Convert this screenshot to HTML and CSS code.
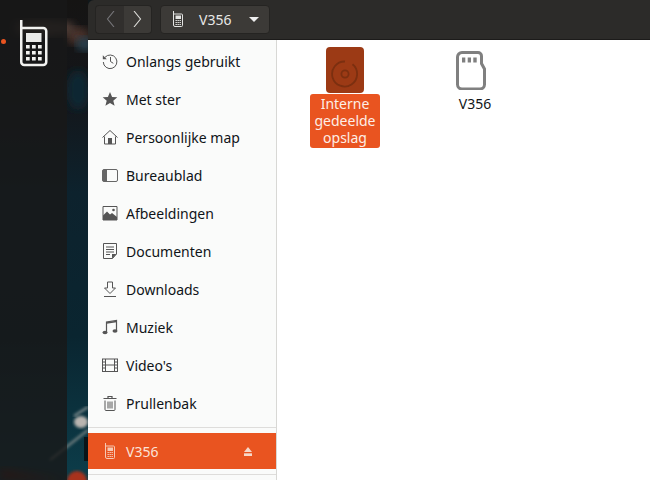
FILE: index.html
```html
<!DOCTYPE html>
<html lang="nl">
<head>
<meta charset="utf-8">
<title>V356</title>
<link rel="stylesheet" href="styles.css">
</head>
<body>
<div class="desktop">
  <svg class="backdrop" width="88" height="480" viewBox="0 0 88 480">
    <defs>
      <linearGradient id="sky" x1="0" y1="0" x2="0" y2="1">
        <stop offset="0" stop-color="#151413"/>
        <stop offset=".2" stop-color="#14161a"/>
        <stop offset=".4" stop-color="#0d222d"/>
        <stop offset=".7" stop-color="#0a2530"/>
        <stop offset="1" stop-color="#0c3d4a"/>
      </linearGradient>
      <filter id="soft"><feGaussianBlur stdDeviation="4"/></filter>
      <filter id="soft1"><feGaussianBlur stdDeviation="1.500"/></filter>
    </defs>
    <rect width="88" height="480" fill="url(#sky)"/>
    <ellipse cx="78" cy="36" rx="12" ry="9" fill="#4a3329" filter="url(#soft)"/>
    <ellipse cx="45" cy="28" rx="30" ry="8" fill="#57423a" filter="url(#soft)"/>
    <ellipse cx="85" cy="44" rx="9" ry="7" fill="#28404f" filter="url(#soft)"/>
    <ellipse cx="78" cy="90" rx="12" ry="20" fill="#0f2731" filter="url(#soft)"/>
    <path d="M0 468Q40 476 70 480H0z" fill="#5c1f12" filter="url(#soft)"/>
    <path d="M50 460 88 430" stroke="#8a918f" stroke-width="2" filter="url(#soft1)"/>
    <path d="M74 416 88 407" stroke="#a9adab" stroke-width="1.500" filter="url(#soft1)"/>
    <ellipse cx="81" cy="422" rx="7" ry="6" fill="#b9b5b0" filter="url(#soft1)"/>
    <circle cx="77" cy="481" r="10" fill="#a8301a" filter="url(#soft1)"/>
    <rect x="84" y="437" width="4" height="24" fill="#0a1418"/>
  </svg>
  <aside class="dock">
    <span class="dot"></span>
    <svg class="dock-phone" viewBox="0 0 28 47"><path d="M1.250 0V42a3 3 0 0 0 3 3h19a3 3 0 0 0 3-3V11a3 3 0 0 0-3-3H1.250" fill="none" stroke="#f2f2f0" stroke-width="2.500"/><rect x="6" y="13" width="15.500" height="9" fill="#eaeae8"/><g fill="#f2f2f0"><rect x="6" y="25" width="3.700" height="3.500"/><rect x="12" y="25" width="3.700" height="3.500"/><rect x="18" y="25" width="3.700" height="3.500"/><rect x="6" y="31" width="3.700" height="3.500"/><rect x="12" y="31" width="3.700" height="3.500"/><rect x="18" y="31" width="3.700" height="3.500"/><rect x="6" y="37" width="3.700" height="3.500"/><rect x="12" y="37" width="3.700" height="3.500"/><rect x="18" y="37" width="3.700" height="3.500"/></g></svg>
  </aside>
  <div class="wallpaper"></div>
  <main class="window">
    <header class="headerbar">
      <div class="nav">
        <button class="nav-btn back"><svg width="9" height="16" viewBox="0 0 9 16"><path d="M8 0 1.500 8 8 16" fill="none" stroke="#77767a" stroke-width="1.100"/></svg></button>
        <button class="nav-btn fwd"><svg width="9" height="16" viewBox="0 0 9 16"><path d="M1 0l6.500 8L1 16" fill="none" stroke="#dcdcd8" stroke-width="1.100"/></svg></button>
      </div>
      <button class="path">
        <svg class="path-icon" width="10" height="16" viewBox="0 0 10 16"><path d="M.5 0v14a1.500 1.500 0 0 0 1.500 1.500h6.500A1 1 0 0 0 9.500 14V4A1 1 0 0 0 8.500 3H1" fill="none" stroke="#e4e4e2"/><rect x="2.500" y="4.500" width="5.500" height="3.500" fill="#e4e4e2"/><path d="M2.500 9.500h5.500M2.500 11.500h5.500M2.500 13.500h5.500" stroke="#e4e4e2" stroke-dasharray="1.400 .6"/></svg>
        <span class="path-label">V356</span>
        <span class="caret"></span>
      </button>
    </header>
    <div class="body">
      <nav class="sidebar">
        <ul class="places">
          <li class="place"><svg class="ico" viewBox="0 0 16 16"><path d="M3 4.300A6.800 6.800 0 1 1 1.300 9" fill="none" stroke="#555" stroke-width="1"/><path d="M.8 2.300v4h4z" fill="#555"/><path d="M8.500 4v4.500l2.800 1.800" fill="none" stroke="#555"/></svg>Onlangs gebruikt</li>
          <li class="place"><svg class="ico" viewBox="0 0 16 16"><path d="M8 1l2.100 4.900 5.200.4-4 3.400 1.300 5.100L8 12.100l-4.600 2.700 1.300-5.100-4-3.400 5.200-.4z" fill="#555"/></svg>Met ster</li>
          <li class="place"><svg class="ico" viewBox="0 0 16 16"><path d="M.5 8.500 8 1.500l7.500 7" fill="none" stroke="#555"/><path d="M2.500 7.500v7.500h11V7.500" fill="none" stroke="#555"/><rect x="6" y="9" width="4" height="6" fill="#555"/></svg>Persoonlijke map</li>
          <li class="place"><svg class="ico" viewBox="0 0 16 16"><rect x=".5" y="2.500" width="15" height="12" rx="1.500" fill="none" stroke="#666"/><path d="M2 2.500h3v12H2a1.500 1.500 0 0 1-1.500-1.500V4A1.500 1.500 0 0 1 2 2.500z" fill="#666"/></svg>Bureaublad</li>
          <li class="place"><svg class="ico" viewBox="0 0 16 16"><path d="M1 1.500h14v13.500H1z" fill="none" stroke="#555"/><path d="M1 13v-2.500l4-4 3 3 2-1.500 5 4V15H1z" fill="#555"/><circle cx="11.500" cy="5" r="1.300" fill="#555"/></svg>Afbeeldingen</li>
          <li class="place"><svg class="ico" viewBox="0 0 16 16"><path d="M1.500.5h13V11l-4 4.500h-9z" fill="none" stroke="#555"/><path d="M4 4h8M4 6.500h8M4 9h8M4 11.500h4" stroke="#555"/><path d="M10 11h4.500L10 15.500z" fill="#555"/></svg>Documenten</li>
          <li class="place"><svg class="ico" viewBox="0 0 16 16"><path d="M5.500 1h5v6h3L8 12.500 2.500 7h3z" fill="none" stroke="#555"/><path d="M2 15.500h12" stroke="#555"/></svg>Downloads</li>
          <li class="place"><svg class="ico" viewBox="0 0 16 16"><path d="M4.500 13V3l10-1.500V11.500" fill="none" stroke="#555" stroke-width="1.200"/><ellipse cx="3" cy="13.500" rx="2.500" ry="1.800" fill="#555"/><ellipse cx="13" cy="12" rx="2.500" ry="1.800" fill="#555"/><path d="M4.500 4l10-1.500" stroke="#555" stroke-width="1.500"/></svg>Muziek</li>
          <li class="place"><svg class="ico" viewBox="0 0 16 16"><rect x=".5" y="2" width="15" height="12.500" fill="none" stroke="#555"/><path d="M3.500 2v12.500M12.500 2v12.500M3.500 8h9M.5 5h3M.5 8h3M.5 11h3M12.500 5h3M12.500 8h3M12.500 11h3" stroke="#555"/></svg>Video's</li>
          <li class="place"><svg class="ico" viewBox="0 0 16 16"><path d="M1.500 3.500h13M6 3.500V1.500h4v2" fill="none" stroke="#555" stroke-width="1.200"/><path d="M3 5.500v9a1 1 0 0 0 1 1h8a1 1 0 0 0 1-1v-9" fill="none" stroke="#555"/><path d="M6 6.500v7M8 6.500v7M10 6.500v7" stroke="#555"/></svg>Prullenbak</li>
        </ul>
        <hr class="rule">
        <div class="place device">
          <svg class="ico" viewBox="0 0 16 16"><path d="M3.500 0v14a1.500 1.500 0 0 0 1.500 1.500h6.500a1 1 0 0 0 1-1V4a1 1 0 0 0-1-1H4" fill="none" stroke="#f6c9b4"/><rect x="5.500" y="4.500" width="5.500" height="3.500" fill="#f6c9b4"/><path d="M5.500 9.500H11M5.500 11.500H11M5.500 13.500H11" stroke="#f6c9b4" stroke-dasharray="1.400 .6"/></svg>
          <span class="device-label">V356</span>
          <svg class="eject" width="8" height="9" viewBox="0 0 10 10" preserveAspectRatio="none"><path d="M5 0l5 5.500H0z" fill="#f6d8c9"/><rect y="7" width="10" height="3" fill="#f6d8c9"/></svg>
        </div>
        <hr class="rule">
      </nav>
      <section class="files">
        <div class="file selected">
          <div class="file-icon disc"><svg width="30" height="30" viewBox="0 0 30 30"><path d="M22.500 5.300A12.500 12.500 0 1 1 15 2.500" fill="none" stroke="#7b2f10" stroke-width="1.800"/><circle cx="15" cy="15" r="3.600" fill="none" stroke="#7b2f10" stroke-width="1.800"/></svg></div>
          <div class="file-name">Interne gedeelde opslag</div>
        </div>
        <div class="file">
          <div class="file-icon sd"><svg width="30" height="39" viewBox="0 0 30 39"><path d="M6 1.500h16a3.500 3.500 0 0 1 3.500 3.500v7.500l3 5.500v15.500a4.500 4.500 0 0 1-4.500 4.500H6a4.500 4.500 0 0 1-4.500-4.500V6A4.500 4.500 0 0 1 6 1.500z" fill="none" stroke="#808080" stroke-width="3"/><path d="M6 6.500h3.300v5H6zM11.700 6.500H15v5h-3.300zM17.300 6.500h3.400v5h-3.400z" fill="#808080"/></svg></div>
          <div class="file-name">V356</div>
        </div>
      </section>
    </div>
  </main>
</div>
</body>
</html>
```
FILE: styles.css
```css
* { box-sizing: border-box; }
html, body { margin: 0; padding: 0; }
body { width: 650px; height: 480px; overflow: hidden; font-family: "Noto Sans", sans-serif; }
.desktop { position: relative; display: flex; width: 650px; height: 480px; overflow: hidden; background: #10171a; }
.backdrop { position: absolute; left: 0; top: 0; }
.dock { position: relative; flex: 0 0 67px; background: rgba(24, 24, 24, .82); }
.dot { position: absolute; left: 1px; top: 39px; width: 5px; height: 5px; border-radius: 50%; background: #e95420; }
.dock-phone { position: absolute; left: 20px; top: 20px; width: 28px; height: 47px; }
.wallpaper { flex: 0 0 21px; }
.window { position: relative; flex: 1; display: flex; flex-direction: column; height: 480px; min-width: 0; }
.headerbar { flex: 0 0 40px; display: flex; align-items: center; gap: 8px; padding: 0 6px 1px 7px; background: #2c2b29; border-bottom: 1px solid #1c1b1a; border-radius: 6px 0 0 0; }
.nav { display: flex; height: 29px; }
button { font-family: inherit; color: inherit; border: 1px solid #252422; margin: 0; padding: 0; }
.nav-btn { height: 29px; display: flex; align-items: center; justify-content: center; }
.back { width: 29px; background: #312f2d; border-radius: 4px 0 0 4px; border-right: 0; }
.fwd { width: 28px; background: #3c3a37; border-radius: 0 4px 4px 0; border-left: 0; }
.path { display: flex; align-items: center; width: 110px; height: 29px; padding: 0 0 0 12px; background: #3c3a37; border-radius: 4px; color: #e8e8e6; }
.path-icon { flex: none; }
.path-label { margin-left: 16px; font-size: 14px; }
.caret { margin-left: 18px; width: 0; height: 0; border-left: 5px solid transparent; border-right: 5px solid transparent; border-top: 5px solid #eee; }
.body { flex: 1; display: flex; min-height: 0; }
.sidebar { flex: 0 0 189px; border-right: 1px solid #d8d8d5; background: #fafbfa; padding-top: 2px; }
.places { list-style: none; margin: 0; padding: 0; }
.place { display: flex; align-items: center; height: 38px; padding-left: 14px; font-size: 14px; color: #101418; white-space: nowrap; }
.ico { flex: none; width: 16px; height: 16px; margin-right: 8px; }
.rule { margin: 5px 0; border: 0; border-top: 1px solid #dedddb; }
.device { height: 36px; background: #e95420; color: #fbe3d8; padding-right: 24px; }
.device-label { flex: 1; }
.files { flex: 1; display: flex; align-items: flex-start; gap: 60px; padding: 7px 0 0 33px; background: #fff; }
.file { width: 70px; display: flex; flex-direction: column; align-items: center; }
.file-icon { display: flex; align-items: center; justify-content: center; width: 38px; height: 46px; }
.disc { padding-top: 8px; background: #9c3a15; border-radius: 4px; }
.sd { margin-right: 8px; }
.file-name { width: 100%; margin-top: 1px; padding: 1px 2px 2px; font-size: 14px; line-height: 17px; text-align: center; color: #101418; }
.selected .file-name { color: #fdeee6; background: #e95420; border-radius: 3px; }
```
